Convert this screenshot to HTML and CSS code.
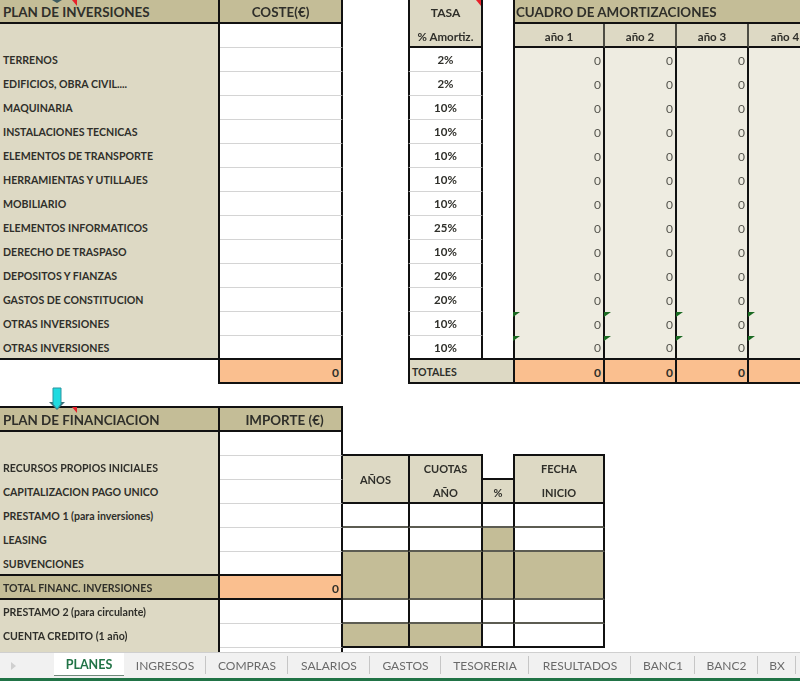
FILE: index.html
```html
<!DOCTYPE html>
<html lang="es">
<head>
<meta charset="utf-8">
<title>PLANES</title>
<link rel="stylesheet" href="styles.css">
</head>
<body>
<main class="sheet">
  <div class="grid">
    <!-- inversiones: header -->
    <div class="c head left big rb mark-a"><svg class="arrow-tip" viewBox="0 0 12 3"><path d="M1 0 6 3 11 0Z" fill="#3d5a5e"/></svg>PLAN DE INVERSIONES</div>
    <div class="c head center big rb">COSTE(€)</div>
    <div class="gap"></div>
    <div class="c sub center med lb rb mark-t">TASA</div>
    <div class="gap"></div>
    <div class="c head tight big wide lb">CUADRO DE AMORTIZACIONES</div>
    <!-- row 2 -->
    <div class="c label"></div><div class="c white rb"></div><div class="gap"></div>
    <div class="c sub center small-up lb rb thick">% Amortiz.</div><div class="gap"></div>
    <div class="c sub center small-up lb sep thick">año 1</div><div class="c sub center small-up sep thick">año 2</div><div class="c sub center small-up sep thick">año 3</div><div class="c sub center small-up thick">año 4</div>
    <!-- rows -->
    <div class="c label">TERRENOS</div><div class="c white rb"></div><div class="gap"></div><div class="c pct lb rb">2%</div><div class="gap"></div><div class="c am lb rb">0</div><div class="c am rb">0</div><div class="c am rb">0</div><div class="c am"></div>
    <div class="c label">EDIFICIOS, OBRA CIVIL....</div><div class="c white rb"></div><div class="gap"></div><div class="c pct lb rb">2%</div><div class="gap"></div><div class="c am lb rb">0</div><div class="c am rb">0</div><div class="c am rb">0</div><div class="c am"></div>
    <div class="c label">MAQUINARIA</div><div class="c white rb"></div><div class="gap"></div><div class="c pct lb rb">10%</div><div class="gap"></div><div class="c am lb rb">0</div><div class="c am rb">0</div><div class="c am rb">0</div><div class="c am"></div>
    <div class="c label">INSTALACIONES TECNICAS</div><div class="c white rb"></div><div class="gap"></div><div class="c pct lb rb">10%</div><div class="gap"></div><div class="c am lb rb">0</div><div class="c am rb">0</div><div class="c am rb">0</div><div class="c am"></div>
    <div class="c label">ELEMENTOS DE TRANSPORTE</div><div class="c white rb"></div><div class="gap"></div><div class="c pct lb rb">10%</div><div class="gap"></div><div class="c am lb rb">0</div><div class="c am rb">0</div><div class="c am rb">0</div><div class="c am"></div>
    <div class="c label">HERRAMIENTAS Y UTILLAJES</div><div class="c white rb"></div><div class="gap"></div><div class="c pct lb rb">10%</div><div class="gap"></div><div class="c am lb rb">0</div><div class="c am rb">0</div><div class="c am rb">0</div><div class="c am"></div>
    <div class="c label">MOBILIARIO</div><div class="c white rb"></div><div class="gap"></div><div class="c pct lb rb">10%</div><div class="gap"></div><div class="c am lb rb">0</div><div class="c am rb">0</div><div class="c am rb">0</div><div class="c am"></div>
    <div class="c label">ELEMENTOS INFORMATICOS</div><div class="c white rb"></div><div class="gap"></div><div class="c pct lb rb">25%</div><div class="gap"></div><div class="c am lb rb">0</div><div class="c am rb">0</div><div class="c am rb">0</div><div class="c am"></div>
    <div class="c label">DERECHO DE TRASPASO</div><div class="c white rb"></div><div class="gap"></div><div class="c pct lb rb">10%</div><div class="gap"></div><div class="c am lb rb">0</div><div class="c am rb">0</div><div class="c am rb">0</div><div class="c am"></div>
    <div class="c label">DEPOSITOS Y FIANZAS</div><div class="c white rb"></div><div class="gap"></div><div class="c pct lb rb">20%</div><div class="gap"></div><div class="c am lb rb">0</div><div class="c am rb">0</div><div class="c am rb">0</div><div class="c am"></div>
    <div class="c label">GASTOS DE CONSTITUCION</div><div class="c white rb"></div><div class="gap"></div><div class="c pct lb rb">20%</div><div class="gap"></div><div class="c am lb rb">0</div><div class="c am rb">0</div><div class="c am rb">0</div><div class="c am"></div>
    <div class="c label">OTRAS INVERSIONES</div><div class="c white rb"></div><div class="gap"></div><div class="c pct lb rb">10%</div><div class="gap"></div><div class="c am lb rb flag">0</div><div class="c am rb flag">0</div><div class="c am rb flag">0</div><div class="c am flag"></div>
    <div class="c label thick">OTRAS INVERSIONES</div><div class="c white rb thick"></div><div class="gap"></div><div class="c pct lb rb thick">10%</div><div class="gap thick"></div><div class="c am lb rb flag thick">0</div><div class="c am rb flag thick">0</div><div class="c am rb flag thick">0</div><div class="c am flag thick"></div>
    <!-- totals -->
    <div class="gap"></div><div class="c orange outdent rb thick">0</div><div class="gap"></div>
    <div class="c totals lb thick">TOTALES</div>
    <div class="c orange lb rb thick">0</div><div class="c orange rb thick">0</div><div class="c orange rb thick">0</div><div class="c orange thick"></div>
    <!-- spacer row -->
    <div class="spacer"></div>
    <!-- financiacion: header -->
    <div class="c head left big top rb mark-f"><svg class="arrow" viewBox="0 0 18 24"><path d="M1 15 9 23 17 15Z" fill="#3d6f78"/><path d="M5 1H13V17L9 22 5 17Z" fill="#1fdbe0" stroke="#2b95a0" stroke-width="1"/></svg>PLAN DE FINANCIACION</div>
    <div class="c head center big top rb nudge">IMPORTE (€)</div>
    <div class="fill"></div>
    <!-- blank -->
    <div class="c label"></div><div class="c white rb"></div><div class="fill"></div>
    <!-- recursos -->
    <div class="c label">RECURSOS PROPIOS INICIALES</div><div class="c white rb"></div>
    <div class="c sub center small tall top thick">AÑOS</div>
    <div class="c sub center small lb rb top">CUOTAS</div>
    <div class="gap"></div>
    <div class="c sub center small lb rb top">FECHA</div>
    <div class="rest"></div>
    <!-- capitalizacion -->
    <div class="c label">CAPITALIZACION PAGO UNICO</div><div class="c white rb"></div>
    <div class="c sub center small lb rb thick">AÑO</div>
    <div class="c sub center small top thick">%</div>
    <div class="c sub center small lb rb thick">INICIO</div>
    <div class="rest"></div>
    <!-- prestamo 1 -->
    <div class="c label">PRESTAMO 1 (para inversiones)</div><div class="c white rb"></div>
    <div class="c white dark"></div><div class="c white lb rb dark"></div><div class="c white dark"></div><div class="c white lb rb dark"></div><div class="rest"></div>
    <!-- leasing -->
    <div class="c label">LEASING</div><div class="c white rb"></div>
    <div class="c white dark"></div><div class="c white lb rb dark"></div><div class="c khaki dark"></div><div class="c white lb rb dark"></div><div class="rest"></div>
    <!-- subvenciones -->
    <div class="c label thick">SUBVENCIONES</div><div class="c white rb thick"></div>
    <div class="c khaki tall dark"></div><div class="c khaki tall lb rb dark"></div><div class="c khaki tall dark"></div><div class="c khaki tall lb rb dark"></div><div class="rest"></div>
    <!-- total financ -->
    <div class="c total-label rb thick">TOTAL FINANC. INVERSIONES</div><div class="c orange rb thick">0</div>
    <div class="rest"></div>
    <!-- prestamo 2 -->
    <div class="c label">PRESTAMO 2 (para circulante)</div><div class="c white rb"></div>
    <div class="c white dark"></div><div class="c white lb rb dark"></div><div class="c white dark"></div><div class="c white lb rb dark"></div><div class="rest"></div>
    <!-- cuenta credito -->
    <div class="c label">CUENTA CREDITO (1 año)</div><div class="c white rb"></div>
    <div class="c khaki thick"></div><div class="c khaki lb rb thick"></div><div class="c white thick"></div><div class="c white lb rb thick"></div><div class="rest"></div>
    <!-- row cut by the tab bar -->
    <div class="c label"></div><div class="c white rb"></div>
  </div>
</main>
<footer class="tabs">
  <span class="scroll-arrow"><svg viewBox="0 0 5 8" width="5" height="8"><path d="M0 0 5 4 0 8Z" fill="#cfcfcf"/></svg></span>
  <span class="tab active">PLANES</span>
  <span class="tab">INGRESOS</span>
  <span class="tab">COMPRAS</span>
  <span class="tab">SALARIOS</span>
  <span class="tab">GASTOS</span>
  <span class="tab">TESORERIA</span>
  <span class="tab">RESULTADOS</span>
  <span class="tab">BANC1</span>
  <span class="tab">BANC2</span>
  <span class="tab">BX</span>
</footer>
</body>
</html>
```
FILE: styles.css
```css
* { box-sizing: border-box; }
html, body { margin: 0; height: 100%; }
body {
  width: 800px;
  height: 681px;
  overflow: hidden;
  display: flex;
  flex-direction: column;
  background: #fff;
  font-family: Lato, "Liberation Sans", sans-serif;
  font-weight: 700;
  color: #2f2f2a;
}
.sheet { height: 652px; overflow: hidden; flex: none; filter: blur(0.3px); }
.grid {
  display: grid;
  width: 821px;
  grid-template-columns: 220px 123px 65px 75px 30px 92px 72px 72px 72px;
  grid-auto-rows: 24px;
}
.c {
  display: flex;
  align-items: center;
  position: relative;
  min-width: 0;
  white-space: nowrap;
  border-bottom: 1px solid #d4d4d4;
}
.gap { min-width: 0; }
.spacer { grid-column: 1 / -1; }
.fill { grid-column: span 7; }
.rest { grid-column: span 3; }
.head {
  background: #c4bd97;
  border-bottom: 2px solid #111;
  padding-top: 2px;
}
.top { box-shadow: 0 -2px 0 #111; }
.left { padding-left: 3px; }
.tight { padding-left: 1px; }
.center { justify-content: center; }
.nudge { padding-left: 8px; }
.big { font-size: 13.4px; }
.med { font-size: 12px; }
.small { font-size: 11px; }
.small-up { font-size: 11.5px; }
.wide { grid-column: span 4; }
.sub { background: #ddd9c4; border-bottom: 0; }
.label {
  background: #ddd9c4;
  font-size: 10.6px;
  padding-left: 3px;
  border-bottom: 0;
  border-right: 2px solid #111;
}
.total-label {
  background: #c4bd97;
  font-size: 10.6px;
  padding-left: 3px;
}
.white { background: #fff; }
.pct { background: #fff; justify-content: center; font-size: 11.5px; }
.am {
  background: #eeece1;
  justify-content: flex-end;
  font-size: 12px;
  font-weight: 400;
  padding-right: 2px;
  border-bottom: 0;
  color: #55554e;
}
.orange {
  background: #fabf8f;
  justify-content: flex-end;
  font-size: 12px;
  padding-right: 2px;
}
.outdent { margin-left: -2px; border-left: 2px solid #111; }
.totals {
  background: #ddd9c4;
  font-size: 10.6px;
  padding-left: 2px;
  grid-column: span 2;
}
.khaki { background: #c4bd97; }
.rb { border-right: 2px solid #111; }
.sep { border-right: 2px solid #4d4d44; }
.lb { border-left: 2px solid #111; }
.thick { border-bottom: 2px solid #111; padding-top: 2px; }
.pct.thick, .am.thick { padding-top: 1px; }
.tall.thick { padding-top: 0; }
.dark { border-bottom: 2px solid #5c5c52; }
.tall { grid-row: span 2; }
.flag::before {
  content: "";
  position: absolute;
  left: -1px;
  top: 0;
  border-top: 5px solid #1a6a22;
  border-right: 7px solid transparent;
}
.lb.flag::before { left: -2px; }
.mark-a::after, .mark-f::after, .mark-t::after {
  content: "";
  position: absolute;
  top: 0;
  border-top: 6px solid #e8202a;
  border-left: 5px solid transparent;
}
.mark-a::after { left: 72px; }
.mark-f::after { left: 72px; top: -1px; }
.mark-t::after { right: 0; }
.arrow-tip { position: absolute; left: 51px; top: 0; width: 12px; height: 3px; }
.arrow { position: absolute; left: 48px; top: -21px; width: 18px; height: 24px; }
.tabs {
  flex: none;
  height: 29px;
  display: grid;
  grid-template-columns: 54px 70px 82px 82px 82px 71px 88px 102px 64px 63px 38px 4px;
  background: #f1f1f1;
  border-top: 1px solid #cfcfcf;
  border-bottom: 3px solid #217346;
  font-size: 12px;
  font-weight: 400;
  color: #6a6a6a;
  filter: blur(0.3px);
}
.scroll-arrow { display: flex; align-items: center; padding-left: 11px; }
.tab {
  display: flex;
  align-items: center;
  justify-content: center;
  position: relative;
  white-space: nowrap;
}
.tab::after {
  content: "";
  position: absolute;
  right: 0;
  top: 3px;
  bottom: 4px;
  width: 1px;
  background: #c6c6c6;
}
.tab.active {
  background: #fff;
  color: #217346;
  font-weight: 700;
  font-size: 12.5px;
  margin-bottom: 2px;
  border-bottom: 1px solid #6f8a7b;
}
.tab.active::after { display: none; }
```
